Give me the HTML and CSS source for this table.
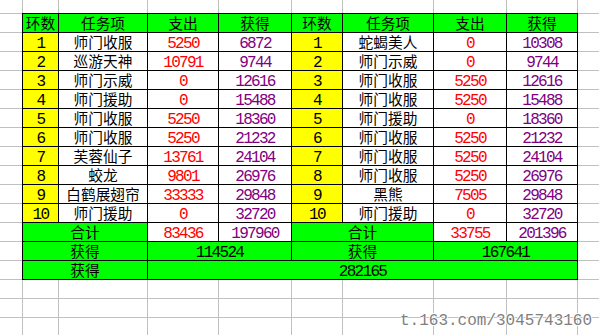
FILE: index.html
```html
<!DOCTYPE html>
<html lang="zh-CN">
<head>
<meta charset="utf-8">
<title>任务表</title>
<link rel="stylesheet" href="styles.css">
</head>
<body>
<div class="sheet">
  <div class="tbl">
    <div class="c g">环数</div><div class="c g">任务项</div><div class="c g">支出</div><div class="c g">获得</div>
    <div class="c g">环数</div><div class="c g">任务项</div><div class="c g">支出</div><div class="c g">获得</div>

    <div class="c y n">1</div><div class="c">师门收服</div><div class="c n red">5250</div><div class="c n pur">6872</div>
    <div class="c y n">1</div><div class="c">蛇蝎美人</div><div class="c n red">0</div><div class="c n pur">10308</div>

    <div class="c y n">2</div><div class="c">巡游天神</div><div class="c n red">10791</div><div class="c n pur">9744</div>
    <div class="c y n">2</div><div class="c">师门示威</div><div class="c n red">0</div><div class="c n pur">9744</div>

    <div class="c y n">3</div><div class="c">师门示威</div><div class="c n red">0</div><div class="c n pur">12616</div>
    <div class="c y n">3</div><div class="c">师门收服</div><div class="c n red">5250</div><div class="c n pur">12616</div>

    <div class="c y n">4</div><div class="c">师门援助</div><div class="c n red">0</div><div class="c n pur">15488</div>
    <div class="c y n">4</div><div class="c">师门收服</div><div class="c n red">5250</div><div class="c n pur">15488</div>

    <div class="c y n">5</div><div class="c">师门收服</div><div class="c n red">5250</div><div class="c n pur">18360</div>
    <div class="c y n">5</div><div class="c">师门援助</div><div class="c n red">0</div><div class="c n pur">18360</div>

    <div class="c y n">6</div><div class="c">师门收服</div><div class="c n red">5250</div><div class="c n pur">21232</div>
    <div class="c y n">6</div><div class="c">师门收服</div><div class="c n red">5250</div><div class="c n pur">21232</div>

    <div class="c y n">7</div><div class="c">芙蓉仙子</div><div class="c n red">13761</div><div class="c n pur">24104</div>
    <div class="c y n">7</div><div class="c">师门收服</div><div class="c n red">5250</div><div class="c n pur">24104</div>

    <div class="c y n">8</div><div class="c">蛟龙</div><div class="c n red">9801</div><div class="c n pur">26976</div>
    <div class="c y n">8</div><div class="c">师门收服</div><div class="c n red">5250</div><div class="c n pur">26976</div>

    <div class="c y n">9</div><div class="c">白鹤展翅帘</div><div class="c n red">33333</div><div class="c n pur">29848</div>
    <div class="c y n">9</div><div class="c">黑熊</div><div class="c n red">7505</div><div class="c n pur">29848</div>

    <div class="c y n">10</div><div class="c">师门援助</div><div class="c n red">0</div><div class="c n pur">32720</div>
    <div class="c y n">10</div><div class="c">师门援助</div><div class="c n red">0</div><div class="c n pur">32720</div>

    <div class="c g span2">合计</div><div class="c n red">83436</div><div class="c n pur">197960</div>
    <div class="c g span2">合计</div><div class="c n red">33755</div><div class="c n pur">201396</div>

    <div class="c g span2">获得</div><div class="c g n span2">114524</div>
    <div class="c g span2">获得</div><div class="c g n span2">167641</div>

    <div class="c g span2">获得</div><div class="c g n span6">282165</div>
  </div>
  <div class="watermark">t.163.com/3045743160</div>
</div>
</body>
</html>
```

FILE: styles.css
```css
html, body {
  margin: 0;
  padding: 0;
  background: #fff;
  overflow: hidden;
}

.sheet {
  position: relative;
  width: 599px;
  height: 335px;
  box-sizing: border-box;
  padding: 13px 0 0 22px;
  background-color: #fff;
  background-image:
    linear-gradient(#c0c0c0, #c0c0c0),
    linear-gradient(#c0c0c0, #c0c0c0),
    linear-gradient(#c0c0c0, #c0c0c0),
    linear-gradient(#c0c0c0, #c0c0c0),
    linear-gradient(#c0c0c0, #c0c0c0),
    linear-gradient(#c0c0c0, #c0c0c0),
    linear-gradient(#c0c0c0, #c0c0c0),
    linear-gradient(#c0c0c0, #c0c0c0),
    linear-gradient(#c0c0c0, #c0c0c0),
    linear-gradient(to bottom, #c0c0c0 0, #c0c0c0 1px, transparent 1px);
  background-size:
    1px 100%, 1px 100%, 1px 100%, 1px 100%, 1px 100%,
    1px 100%, 1px 100%, 1px 100%, 1px 100%,
    100% 19px;
  background-position:
    22px 0, 58px 0, 147px 0, 218px 0, 291px 0,
    342px 0, 433px 0, 506px 0, 577px 0,
    0 13px;
  background-repeat:
    no-repeat, no-repeat, no-repeat, no-repeat, no-repeat,
    no-repeat, no-repeat, no-repeat, no-repeat,
    repeat-y;
}

.tbl {
  display: grid;
  grid-template-columns: 35px 88px 70px 72px 50px 90px 72px 70px;
  grid-auto-rows: 18px;
  gap: 1px;
  padding: 1px;
  background: #000;
  width: max-content;
}

.c {
  display: flex;
  justify-content: center;
  align-items: flex-end;
  background: #fff;
  color: #000;
  font-family: "Noto Sans CJK SC", "Noto Sans CJK JP", sans-serif;
  font-size: 14.7px;
  line-height: 18px;
  white-space: nowrap;
  overflow: visible;
}

.g { background: #00ff00; }
.y { background: #ffff00; }

.n {
  font-family: "Liberation Mono", monospace;
  font-size: 16px;
  letter-spacing: -1.7px;
  line-height: 13px;
}

.red { color: #ff0000; }
.pur { color: #800080; }

.span2 { grid-column: span 2; }
.span6 { grid-column: span 6; }

.watermark {
  position: absolute;
  left: 400px;
  top: 313px;
  font-family: "Liberation Mono", monospace;
  font-size: 16px;
  line-height: 16px;
  color: #7f7f7f;
  text-shadow: 1px 0 #fff, -1px 0 #fff, 0 1px #fff, 0 -1px #fff;
  white-space: nowrap;
}
```
